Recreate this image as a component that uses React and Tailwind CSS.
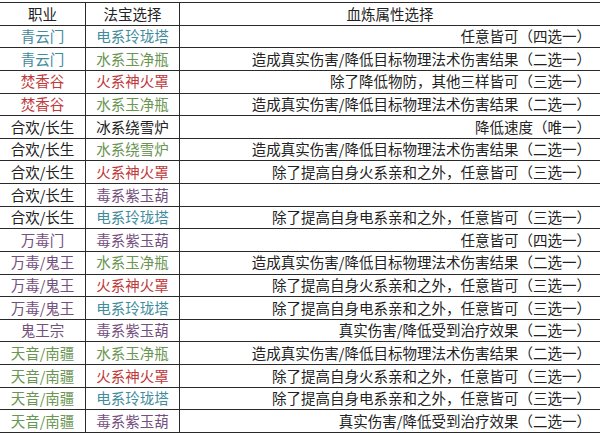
const TEAL = "text-[#3f8c9c]";
const GREEN = "text-[#6a9552]";
const RED = "text-[#c0393b]";
const PURPLE = "text-[#74507e]";
const BLACK = "text-[#222]";

const rows = [
  ["青云门", TEAL, "电系玲珑塔", TEAL, "任意皆可（四选一）"],
  ["青云门", TEAL, "水系玉净瓶", GREEN, "造成真实伤害/降低目标物理法术伤害结果（二选一）"],
  ["焚香谷", RED, "火系神火罩", RED, "除了降低物防，其他三样皆可（三选一）"],
  ["焚香谷", RED, "水系玉净瓶", GREEN, "造成真实伤害/降低目标物理法术伤害结果（二选一）"],
  ["合欢/长生", BLACK, "冰系绕雪炉", BLACK, "降低速度（唯一）"],
  ["合欢/长生", BLACK, "水系绕雪炉", GREEN, "造成真实伤害/降低目标物理法术伤害结果（二选一）"],
  ["合欢/长生", BLACK, "火系神火罩", RED, "除了提高自身火系亲和之外，任意皆可（三选一）"],
  ["合欢/长生", BLACK, "毒系紫玉葫", PURPLE, ""],
  ["合欢/长生", BLACK, "电系玲珑塔", TEAL, "除了提高自身电系亲和之外，任意皆可（三选一）"],
  ["万毒门", PURPLE, "毒系紫玉葫", PURPLE, "任意皆可（四选一）"],
  ["万毒/鬼王", PURPLE, "水系玉净瓶", GREEN, "造成真实伤害/降低目标物理法术伤害结果（二选一）"],
  ["万毒/鬼王", PURPLE, "火系神火罩", RED, "除了提高自身火系亲和之外，任意皆可（三选一）"],
  ["万毒/鬼王", PURPLE, "电系玲珑塔", TEAL, "除了提高自身电系亲和之外，任意皆可（三选一）"],
  ["鬼王宗", PURPLE, "毒系紫玉葫", PURPLE, "真实伤害/降低受到治疗效果（二选一）"],
  ["天音/南疆", GREEN, "水系玉净瓶", GREEN, "造成真实伤害/降低目标物理法术伤害结果（二选一）"],
  ["天音/南疆", GREEN, "火系神火罩", RED, "除了提高自身火系亲和之外，任意皆可（三选一）"],
  ["天音/南疆", GREEN, "电系玲珑塔", TEAL, "除了提高自身电系亲和之外，任意皆可（三选一）"],
  ["天音/南疆", GREEN, "毒系紫玉葫", PURPLE, "真实伤害/降低受到治疗效果（二选一）"],
];

const cell = "h-[22.63px] flex items-center border-b border-[#2a2a2a] leading-none";

export default function App() {
  return (
    <div
      className="w-[600px] h-[434px] bg-white pt-[2px] overflow-hidden text-[14.5px]"
      style={{ fontFamily: '"Noto Sans CJK SC", "Noto Sans", sans-serif' }}
    >
      <div className="grid grid-cols-[86px_94px_1fr] border-t border-[#2a2a2a]">
        <div className={`${cell} justify-center border-r ${BLACK}`}>职业</div>
        <div className={`${cell} justify-center border-r ${BLACK}`}>法宝选择</div>
        <div className={`${cell} justify-center ${BLACK}`}>血炼属性选择</div>
        {rows.map(([job, jobColor, item, itemColor, attr], i) => (
          <div key={i} className="contents">
            <div className={`${cell} justify-center border-r ${jobColor}`}>{job}</div>
            <div className={`${cell} justify-center border-r ${itemColor}`}>{item}</div>
            <div className={`${cell} justify-end pr-[9px] ${BLACK}`}>{attr}</div>
          </div>
        ))}
      </div>
    </div>
  );
}
